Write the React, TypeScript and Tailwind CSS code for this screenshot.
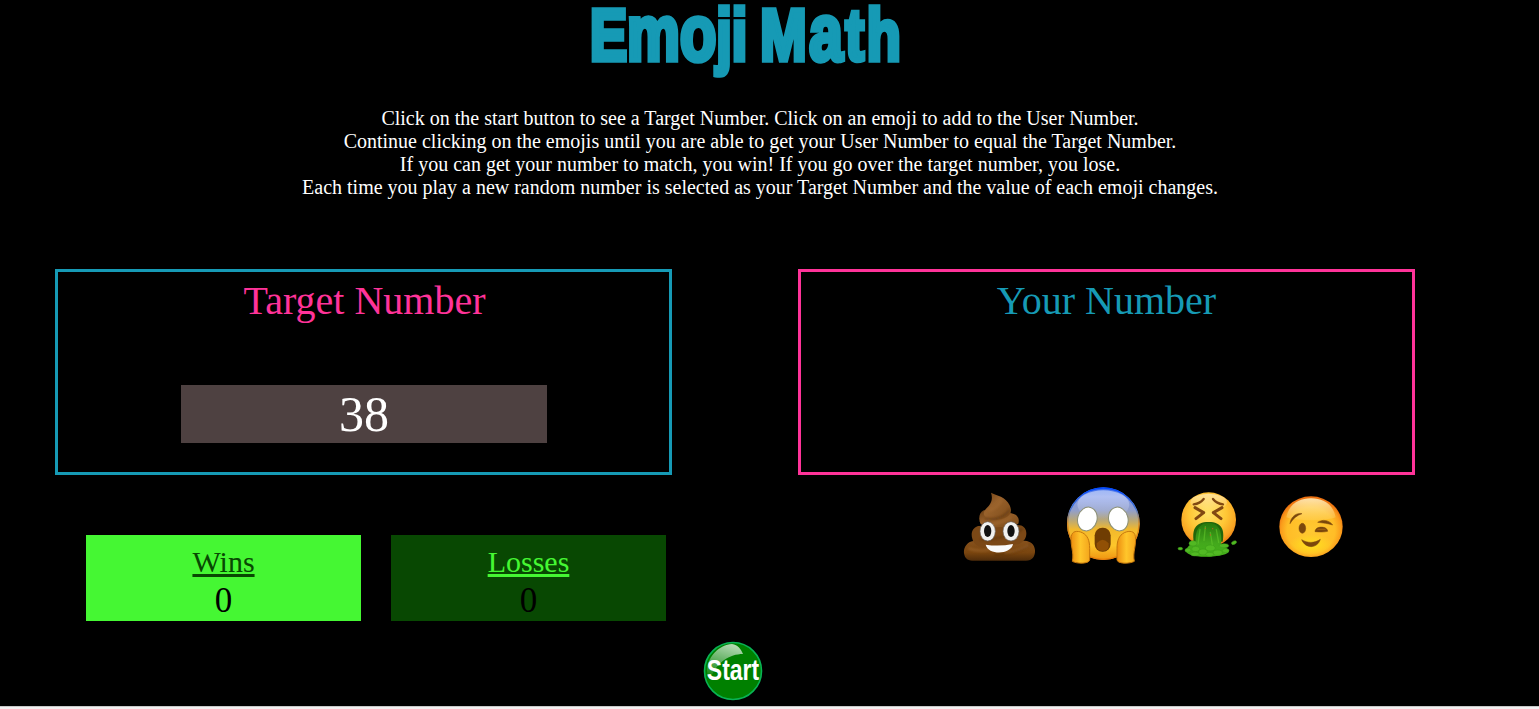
import React from "react";

function Poop() {
  return (
    <svg width="100" height="90" viewBox="0 0 300 270">
      <defs>
        <linearGradient id="pb" x1="0" y1="0" x2="0" y2="1">
          <stop offset="0" stopColor="#87521d" />
          <stop offset="0.6" stopColor="#79450f" />
          <stop offset="1" stopColor="#4f2c0a" />
        </linearGradient>
        <linearGradient id="pt" x1="0" y1="0" x2="1" y2="1">
          <stop offset="0" stopColor="#6a3d12" />
          <stop offset="0.4" stopColor="#99622c" />
          <stop offset="1" stopColor="#7b4a18" />
        </linearGradient>
        <filter id="soft"><feGaussianBlur stdDeviation="3" /></filter>
      </defs>
      <path d="M70 183 C48 186 38 208 43 224 C46 237 56 242 72 242 H228 C248 242 256 228 255 210 C253 192 243 184 224 182 Z" fill="url(#pb)" />
      <path d="M84 138 C66 144 62 162 67 176 C71 192 86 203 110 204 L205 193 C230 184 234 158 224 144 C218 137 211 135 200 135 Z" fill="#7b4816" />
      <path d="M101 91 C86 98 85 119 92 132 C112 146 180 144 205 131 C209 118 205 104 184 100 Z" fill="url(#pt)" />
      <path d="M123 38 C139 46 168 50 179 76 C187 94 183 106 165 114 C141 125 110 120 102 104 C98 92 109 87 116 78 C126 66 128 53 123 38 Z" fill="url(#pt)" />
      <path d="M105 116 C135 124 168 108 178 89 M92 178 C132 182 205 160 218 145 M133 224 C180 226 232 202 242 191" fill="none" stroke="#4f2c0b" strokeWidth="5" opacity=".6" filter="url(#soft)" />
      <path d="M118 92 C131 88 148 76 154 60 M108 132 C138 136 170 122 184 112 M55 205 C80 214 105 212 120 209 M165 218 C195 215 225 202 237 194" fill="none" stroke="#a66d33" strokeWidth="7" opacity=".5" filter="url(#soft)" />
      <ellipse cx="113" cy="154" rx="23" ry="29" fill="#f1f1ef" stroke="#66615d" strokeWidth="2" />
      <ellipse cx="183" cy="154" rx="24" ry="29" fill="#f1f1ef" stroke="#66615d" strokeWidth="2" />
      <ellipse cx="113" cy="153" rx="11" ry="18" fill="#111" />
      <ellipse cx="183" cy="153" rx="11" ry="18" fill="#111" />
      <path d="M107 194 Q148 200 189 192 C184 224 115 227 107 194Z" fill="#fafafa" />
    </svg>
  );
}

function Scream() {
  return (
    <svg width="100" height="90" viewBox="0 0 300 270">
      <defs>
        <linearGradient id="sf" x1="0" y1="0" x2="0" y2="1">
          <stop offset="0" stopColor="#2c62ee" />
          <stop offset="0.13" stopColor="#8099ea" />
          <stop offset="0.32" stopColor="#929fc9" />
          <stop offset="0.45" stopColor="#b9a878" />
          <stop offset="0.58" stopColor="#f2b92c" />
          <stop offset="0.8" stopColor="#fdc62b" />
          <stop offset="1" stopColor="#ee9310" />
        </linearGradient>
        <linearGradient id="sm" x1="0" y1="0" x2="0" y2="1">
          <stop offset="0" stopColor="#0047ff" />
          <stop offset="0.3" stopColor="#4a78d0" />
          <stop offset="0.5" stopColor="#d98a20" />
          <stop offset="1" stopColor="#e87d0c" />
        </linearGradient>
        <linearGradient id="sh" x1="0" y1="0" x2="1" y2="0">
          <stop offset="0" stopColor="#ed8e10" />
          <stop offset="0.5" stopColor="#ffc62b" />
          <stop offset="1" stopColor="#f4a51c" />
        </linearGradient>
        <linearGradient id="sg" x1="0" y1="0" x2="0" y2="1">
          <stop offset="0" stopColor="#fff" stopOpacity=".5" />
          <stop offset="1" stopColor="#fff" stopOpacity="0" />
        </linearGradient>
      </defs>
      <circle cx="145" cy="131" r="109" fill="url(#sf)" />
      <circle cx="145" cy="131" r="107" fill="none" stroke="url(#sm)" strokeWidth="4" />
      <ellipse cx="145" cy="74" rx="78" ry="43" fill="url(#sg)" />
      <ellipse cx="97" cy="117" rx="29" ry="36" transform="rotate(15 97 117)" fill="#fff" stroke="#8b8f74" strokeWidth="3" />
      <ellipse cx="190" cy="117" rx="29" ry="36" transform="rotate(-15 190 117)" fill="#fff" stroke="#8b8f74" strokeWidth="3" />
      <rect x="119" y="143" width="48" height="72" rx="23" fill="#6f3d03" />
      <path d="M125 190 Q143 169 161 190 V200 Q158 213 143 213 Q128 213 125 200Z" fill="#915005" />
      <path d="M52 244 C58 217 45 197 49 169 C51 153 66 151 82 158 C98 166 104 182 104 205 V239 C104 252 65 252 52 244Z" fill="url(#sh)" stroke="#c6780c" strokeWidth="3" />
      <path d="M238 244 C232 217 245 197 241 169 C239 153 224 151 208 158 C192 166 186 182 186 205 V239 C186 252 225 252 238 244Z" fill="url(#sh)" stroke="#c6780c" strokeWidth="3" />
    </svg>
  );
}

function Vomit() {
  return (
    <svg width="100" height="90" viewBox="0 0 300 270">
      <defs>
        <radialGradient id="vf" cx=".48" cy=".38" r=".62">
          <stop offset="0" stopColor="#ffe36a" />
          <stop offset="0.55" stopColor="#ffc736" />
          <stop offset="0.86" stopColor="#f8a322" />
          <stop offset="1" stopColor="#e87913" />
        </radialGradient>
        <linearGradient id="vg" x1="0" y1="0" x2="0" y2="1">
          <stop offset="0" stopColor="#27780d" />
          <stop offset="0.6" stopColor="#43a81c" />
          <stop offset="1" stopColor="#45b419" />
        </linearGradient>
        <linearGradient id="vs" x1="0" y1="0" x2="0" y2="1">
          <stop offset="0" stopColor="#fff" stopOpacity=".5" />
          <stop offset="1" stopColor="#fff" stopOpacity="0" />
        </linearGradient>
      </defs>
      <circle cx="146" cy="119" r="82" fill="url(#vf)" />
      <ellipse cx="146" cy="67" rx="55" ry="26" fill="url(#vs)" />
      <g fill="none" stroke="#814912" strokeLinecap="round" strokeLinejoin="round">
        <path d="M101 73 Q120 71 131 57 M189 73 Q170 71 159 57" strokeWidth="7" />
        <path d="M105 83 L131 98 L108 116 M186 83 L160 98 L183 116" strokeWidth="9" />
      </g>
      <path d="M101 185 C96 150 104 126 146 126 C186 126 194 150 188 185 Z" fill="#22650b" />
      <path d="M108 194 C102 150 120 129 146 129 C174 129 188 150 183 194 L205 208 C213 221 190 228 150 230 C108 232 75 225 79 210 C82 199 95 188 108 194Z" fill="url(#vg)" />
      <g fill="none" stroke="#63c72c" strokeWidth="4" opacity=".6" strokeLinecap="round">
        <path d="M120 149 L114 192 M136 140 L132 181 M151 157 L157 195 M169 149 L176 187" />
      </g>
      <g fill="#51b923" stroke="#3c981a" strokeWidth="1.5">
        <ellipse cx="99" cy="190" rx="12" ry="8" /><ellipse cx="84" cy="211" rx="9" ry="6" />
        <ellipse cx="107" cy="207" rx="12" ry="8" /><ellipse cx="129" cy="216" rx="13" ry="9" />
        <ellipse cx="151" cy="204" rx="15" ry="9" /><ellipse cx="173" cy="218" rx="14" ry="8" />
        <ellipse cx="192" cy="197" rx="14" ry="6" /><ellipse cx="197" cy="212" rx="10" ry="6" />
        <ellipse cx="105" cy="222" rx="13" ry="6" /><ellipse cx="149" cy="223" rx="12" ry="6" />
        <ellipse cx="61" cy="206" rx="7" ry="4" /><ellipse cx="222" cy="188" rx="8" ry="5" transform="rotate(-25 222 188)" />
      </g>
      <g fill="#bb641d"><circle cx="136" cy="145" r="2" /><circle cx="158" cy="146" r="2" /><circle cx="151" cy="165" r="2" /></g>
    </svg>
  );
}

function Wink() {
  return (
    <svg width="100" height="90" viewBox="0 0 300 270">
      <defs>
        <radialGradient id="wf" cx=".5" cy=".56" r=".54">
          <stop offset="0" stopColor="#ffc932" />
          <stop offset="0.7" stopColor="#ffbd27" />
          <stop offset="0.88" stopColor="#fa9c1b" />
          <stop offset="1" stopColor="#ec7010" />
        </radialGradient>
        <linearGradient id="ws" x1="0" y1="0" x2="0" y2="1">
          <stop offset="0" stopColor="#fff4c8" stopOpacity=".85" />
          <stop offset="1" stopColor="#ffe28d" stopOpacity=".2" />
        </linearGradient>
        <radialGradient id="wy">
          <stop offset="0" stopColor="#ffe51c" stopOpacity=".9" />
          <stop offset="1" stopColor="#ffe51c" stopOpacity="0" />
        </radialGradient>
      </defs>
      <ellipse cx="138" cy="140" rx="95" ry="91" fill="url(#wf)" />
      <ellipse cx="138" cy="195" rx="68" ry="32" fill="url(#wy)" />
      <path d="M64 112 C72 71 104 55 138 55 C172 55 204 71 212 112 C184 124 94 124 64 112Z" fill="url(#ws)" />
      <g fill="#7b470c" stroke="#7b470c" strokeWidth="1.5">
        <ellipse cx="112" cy="145" rx="10" ry="15" />
        <path d="M75 131 C77 109 96 97 111 101 C96 106 84 115 75 131Z M158 127 C172 117 193 120 203 135 C188 130 174 129 158 127Z M150 155 C151 136 188 138 188 154 C176 157 164 156 150 155Z M110 179 C128 190 149 190 166 178 C157 207 121 207 110 179Z" />
      </g>
      <path d="M157 148 H182" stroke="#b36e13" strokeWidth="2" />
    </svg>
  );
}

function StartButton() {
  return (
    <button className="block" aria-label="Start">
      <svg className="overflow-visible" width="60" height="60" viewBox="0 0 60 60">
        <defs>
          <linearGradient id="gl" x1="0.6" y1="0" x2="0.3" y2="1">
            <stop offset="0" stopColor="#fff" stopOpacity=".7" />
            <stop offset="1" stopColor="#fff" stopOpacity=".05" />
          </linearGradient>
        </defs>
        <circle cx="30" cy="30" r="28.5" fill="#008000" stroke="#09b354" strokeWidth="1.6" />
        <path d="M4 29 C5 15 16 4 29 3 C35 4 38 8 40 13 C27 13 13 21 7 39 C5 36 4 32 4 29Z" fill="url(#gl)" />
        <text transform="translate(30 39) scale(.765 1)" textAnchor="middle" fontFamily="Liberation Sans, sans-serif" fontWeight="700" fontSize="30" fill="#fff">Start</text>
      </svg>
    </button>
  );
}

export default function App() {
  return (
    <div className="flex h-[709px] w-[1539px] flex-col bg-black font-['Liberation_Serif',serif] text-white">
      <header className="flex h-[107px] w-[1494px] shrink-0 justify-center">
        <h1 className="h-[72px] origin-top scale-x-[0.762] whitespace-nowrap font-['Liberation_Sans',sans-serif] text-[73px] leading-[70px] font-bold text-[#169ab5] [word-spacing:-3px] [-webkit-text-stroke:5.5px_#169ab5]">
          E<span className="text-[78px] leading-[0]">mo</span>ji{" "}
          <span className="tracking-[3.5px]">M<span className="text-[79px] leading-[0]">a</span>th</span>
        </h1>
      </header>

      <p className="h-[162px] w-[1520px] shrink-0 text-center text-[20px] leading-[23px]">
        Click on the start button to see a Target Number. Click on an emoji to add to the User Number.
        <br />
        Continue clicking on the emojis until you are able to get your User Number to equal the Target Number.
        <br />
        If you can get your number to match, you win! If you go over the target number, you lose.
        <br />
        Each time you play a new random number is selected as your Target Number and the value of each emoji changes.
      </p>

      <main className="flex shrink-0 gap-[126px] pl-[55px]">
        <section className="w-[617px]">
          <div className="flex h-[206px] flex-col items-center border-[3px] border-[#169ab5] pt-[6px]">
            <h2 className="pl-[2px] text-[40px] leading-[46px] text-[#ff3399]">Target Number</h2>
            <div className="mt-[61px] h-[58px] w-[366px] bg-[#4e4141] pl-px text-center text-[50px] leading-[58px]">38</div>
          </div>
          <div className="mt-[60px] ml-[31px] flex gap-[30px] text-center text-black">
            <div className="h-[86px] w-[275px] bg-[#45f733] pt-[9px]">
              <h3 className="text-[30px] leading-[35px] text-[#084802] underline decoration-[3px] underline-offset-[2px]">Wins</h3>
              <div className="pt-[2px] text-[35px] leading-[40px]">0</div>
            </div>
            <div className="h-[86px] w-[275px] bg-[#084802] pt-[9px]">
              <h3 className="text-[30px] leading-[35px] text-[#45f733] underline decoration-[3px] underline-offset-[2px]">Losses</h3>
              <div className="pt-[2px] text-[35px] leading-[40px]">0</div>
            </div>
          </div>
        </section>

        <section className="w-[617px]">
          <div className="h-[206px] border-[3px] border-[#ff3399] pt-[6px] text-center">
            <h2 className="text-[40px] leading-[46px] text-[#169ab5]">Your Number</h2>
          </div>
          <div className="mt-[5px] ml-[152px] flex gap-[5px]">
            <Poop />
            <Scream />
            <Vomit />
            <Wink />
          </div>
        </section>
      </main>

      <footer className="flex h-[85px] shrink-0 items-start pt-[20px] pl-[703px]">
        <StartButton />
      </footer>
      <div className="h-[3px] shrink-0 border-t border-[#c8c8c8] bg-[#f3eff1]" />
    </div>
  );
}
